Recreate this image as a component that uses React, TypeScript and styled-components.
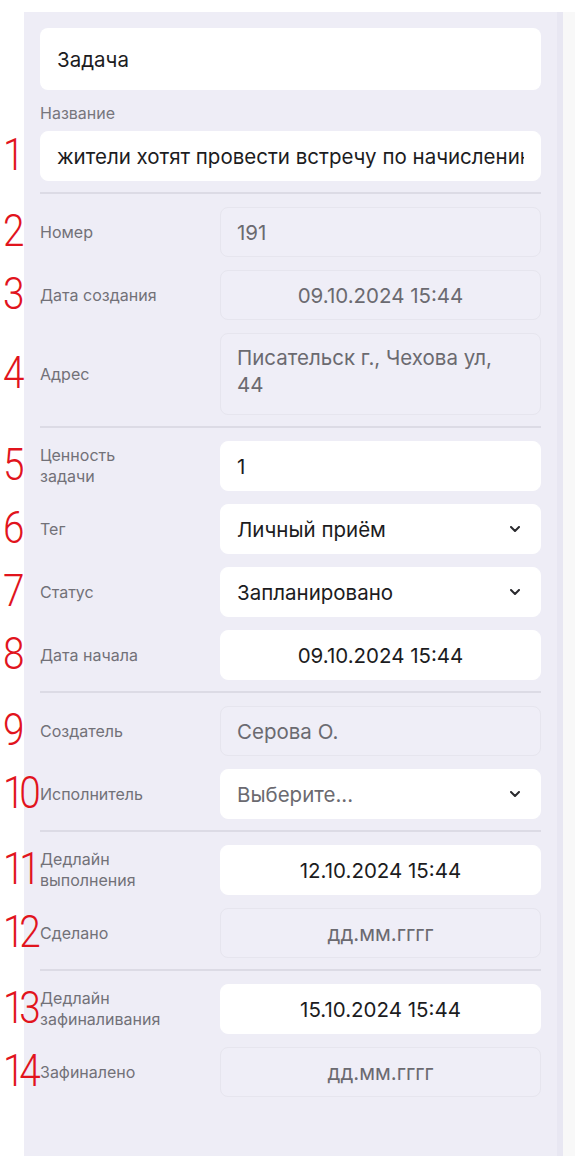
import React from 'react';
import styled, { createGlobalStyle } from 'styled-components';

const GlobalStyle = createGlobalStyle`
  html, body {
    margin: 0;
    padding: 0;
    background: #ffffff;
  }
  body {
    font-family: Inter, "Noto Sans", sans-serif;
  }
`;

const Page = styled.div`
  display: flex;
  min-height: 1156px;
  padding-top: 12px;
  padding-left: 24px;
  box-sizing: border-box;
`;

const Panel = styled.div`
  width: 533px;
  background: #eeedf6;
  padding: 16px 16px 40px;
  box-sizing: border-box;
  display: flex;
  flex-direction: column;
  gap: 13px;
`;

const Rail = styled.div`
  width: 6px;
  background: #e8e7f2;
`;

const Aside = styled.div`
  flex: 1;
  background: #f8f8f8;
`;

const HeaderCard = styled.div`
  height: 62px;
  background: #ffffff;
  border-radius: 8px;
  display: flex;
  align-items: center;
  padding: 0 17px;
  font-size: 20.5px;
  color: #1c1c1e;
`;

const TitleGroup = styled.div`
  display: flex;
  flex-direction: column;
  gap: 8px;
`;

const TopLabel = styled.div`
  font-size: 16px;
  line-height: 20px;
  color: #77767d;
`;

const Divider = styled.div`
  height: 0;
  margin-top: -2px;
  border-top: 2px solid #dcdbe5;
`;

const Row = styled.div`
  position: relative;
  display: grid;
  grid-template-columns: 180px 1fr;
  align-items: center;
`;

const Marker = styled.span`
  position: absolute;
  left: -37px;
  top: 50%;
  transform: translateY(-52%) scaleX(0.88);
  transform-origin: left center;
  font-family: Roboto, sans-serif;
  font-weight: 300;
  font-size: 44px;
  line-height: 1;
  color: #e1141d;
  letter-spacing: -6px;
  pointer-events: none;
`;

const Label = styled.div`
  max-width: 128px;
  font-size: 16px;
  line-height: 21px;
  color: #727178;
`;

const Field = styled.div<{ $editable?: boolean; $center?: boolean; $tall?: boolean }>`
  position: relative;
  height: ${(p) => (p.$tall ? 82 : 50)}px;
  box-sizing: border-box;
  border-radius: 8px;
  padding: ${(p) => (p.$tall ? '10px 16px' : '0 16px')};
  display: flex;
  align-items: ${(p) => (p.$tall ? 'flex-start' : 'center')};
  justify-content: ${(p) => (p.$center ? 'center' : 'flex-start')};
  background: ${(p) => (p.$editable ? '#ffffff' : '#efeef7')};
  border: 1px solid ${(p) => (p.$editable ? '#ffffff' : '#e6e5ee')};
  color: ${(p) => (p.$editable ? '#1c1c1e' : '#6b6a70')};
  font-size: 20.5px;
  line-height: 27px;
`;

const Value = styled.span<{ $wrap?: boolean }>`
  overflow: hidden;
  white-space: ${(p) => (p.$wrap ? 'normal' : 'nowrap')};
  max-width: ${(p) => (p.$wrap ? '275px' : 'none')};
  flex: 1;
  min-width: 0;
`;

const CenterValue = styled.span`
  white-space: nowrap;
`;

const Chevron = styled.svg`
  position: absolute;
  right: 20px;
  top: 50%;
  margin-top: -3px;
  width: 10px;
  height: 6px;
`;

const Placeholder = styled.span`
  color: #6b6a70;
`;

function Select({ children }: { children: React.ReactNode }) {
  return (
    <Field $editable>
      <Value>{children}</Value>
      <Chevron viewBox="0 0 10 6" fill="none">
        <polyline points="1,1 5,5 9,1" stroke="#2a2a2e" strokeWidth="2" strokeLinecap="round" strokeLinejoin="round" />
      </Chevron>
    </Field>
  );
}

export default function App() {
  return (
    <>
      <GlobalStyle />
      <Page>
        <Panel>
          <HeaderCard>Задача</HeaderCard>

          <TitleGroup>
            <TopLabel>Название</TopLabel>
            <Row>
              <Marker>1</Marker>
              <Field $editable style={{ gridColumn: '1 / 3' }}>
                <Value>жители хотят провести встречу по начислению платы за капремонт</Value>
              </Field>
            </Row>
          </TitleGroup>

          <Divider />

          <Row>
            <Marker>2</Marker>
            <Label>Номер</Label>
            <Field>
              <Value>191</Value>
            </Field>
          </Row>
          <Row>
            <Marker>3</Marker>
            <Label>Дата создания</Label>
            <Field $center>
              <CenterValue>09.10.2024 15:44</CenterValue>
            </Field>
          </Row>
          <Row>
            <Marker>4</Marker>
            <Label>Адрес</Label>
            <Field $tall>
              <Value $wrap>Писательск г., Чехова ул, 44</Value>
            </Field>
          </Row>

          <Divider />

          <Row>
            <Marker>5</Marker>
            <Label>Ценность задачи</Label>
            <Field $editable>
              <Value>1</Value>
            </Field>
          </Row>
          <Row>
            <Marker>6</Marker>
            <Label>Тег</Label>
            <Select>Личный приём</Select>
          </Row>
          <Row>
            <Marker>7</Marker>
            <Label>Статус</Label>
            <Select>Запланировано</Select>
          </Row>
          <Row>
            <Marker>8</Marker>
            <Label>Дата начала</Label>
            <Field $editable $center>
              <CenterValue>09.10.2024 15:44</CenterValue>
            </Field>
          </Row>

          <Divider />

          <Row>
            <Marker>9</Marker>
            <Label>Создатель</Label>
            <Field>
              <Value>Серова О.</Value>
            </Field>
          </Row>
          <Row>
            <Marker>10</Marker>
            <Label>Исполнитель</Label>
            <Select>
              <Placeholder>Выберите...</Placeholder>
            </Select>
          </Row>

          <Divider />

          <Row>
            <Marker>11</Marker>
            <Label>Дедлайн выполнения</Label>
            <Field $editable $center>
              <CenterValue>12.10.2024 15:44</CenterValue>
            </Field>
          </Row>
          <Row>
            <Marker>12</Marker>
            <Label>Сделано</Label>
            <Field $center>
              <CenterValue>дд.мм.гггг</CenterValue>
            </Field>
          </Row>

          <Divider />

          <Row>
            <Marker>13</Marker>
            <Label>Дедлайн зафиналивания</Label>
            <Field $editable $center>
              <CenterValue>15.10.2024 15:44</CenterValue>
            </Field>
          </Row>
          <Row>
            <Marker>14</Marker>
            <Label>Зафиналено</Label>
            <Field $center>
              <CenterValue>дд.мм.гггг</CenterValue>
            </Field>
          </Row>
        </Panel>
        <Rail />
        <Aside />
      </Page>
    </>
  );
}
